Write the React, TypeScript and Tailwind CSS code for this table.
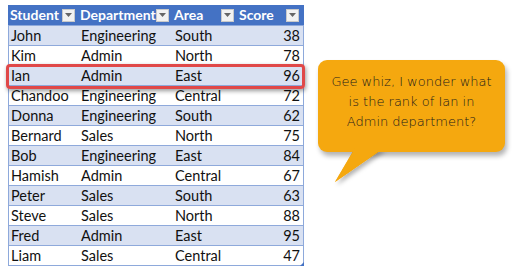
import React from 'react';

interface Row {
    student: string
    department: string
    area: string
    score: number
}

const rows: Row[] = [
    { student: 'John', department: 'Engineering', area: 'South', score: 38 },
    { student: 'Kim', department: 'Admin', area: 'North', score: 78 },
    { student: 'Ian', department: 'Admin', area: 'East', score: 96 },
    { student: 'Chandoo', department: 'Engineering', area: 'Central', score: 72 },
    { student: 'Donna', department: 'Engineering', area: 'South', score: 62 },
    { student: 'Bernard', department: 'Sales', area: 'North', score: 75 },
    { student: 'Bob', department: 'Engineering', area: 'East', score: 84 },
    { student: 'Hamish', department: 'Admin', area: 'Central', score: 67 },
    { student: 'Peter', department: 'Sales', area: 'South', score: 63 },
    { student: 'Steve', department: 'Sales', area: 'North', score: 88 },
    { student: 'Fred', department: 'Admin', area: 'East', score: 95 },
    { student: 'Liam', department: 'Sales', area: 'Central', score: 47 },
]

const FilterButton = () => (
    <span className="w-[13px] h-[13px] flex items-center justify-center bg-[#f2f2f2] border border-[#c9c9c9] shrink-0">
        <svg width="7" height="4" viewBox="0 0 7 4">
            <path d="M0 0h7L3.5 4z" fill="#666" />
        </svg>
    </span>
)

const HeaderCell = ({ label }: { label: string }) => (
    <div className="flex items-center justify-between pl-[2px] pr-[3px] h-full">
        <span className="font-bold text-white">{label}</span>
        <FilterButton />
    </div>
)

const App = () => {
    return (
        <div className="w-[517px] h-[274px] bg-white flex overflow-hidden" style={{ fontFamily: 'Lato, "Open Sans", sans-serif' }}>
            {/* Table */}
            <div className="ml-[8px] mt-[5px] relative w-[296px] h-fit">
                <div className="grid grid-cols-[70px_94px_65px_65px] h-[20px] bg-[#4472c4] text-[14px] leading-[20px]">
                    <HeaderCell label="Student" />
                    <HeaderCell label="Department" />
                    <HeaderCell label="Area" />
                    <HeaderCell label="Score" />
                </div>
                <div className="border-x border-b border-[#8ea9db]">
                    {rows.map((r, i) => (
                        <div
                            key={r.student}
                            className={`grid grid-cols-[70px_94px_65px_63px] h-[20px] text-[14.5px] leading-[19px] text-[#111] border-t border-[#8ea9db] ${i % 2 === 0 ? 'bg-[#d9e1f2]' : 'bg-white'}`}
                        >
                            <span className="pl-[2px]">{r.student}</span>
                            <span className="pl-[2px]">{r.department}</span>
                            <span className="pl-[2px]">{r.area}</span>
                            <span className="text-right pr-[1px]">{r.score}</span>
                        </div>
                    ))}
                </div>
                <span className="absolute right-0 bottom-0 w-0 h-0 border-l-[4px] border-b-[4px] border-l-transparent border-b-[#4472c4]" />
                {/* highlight on Ian row */}
                <div className="absolute left-[-2px] top-[59px] w-[299px] h-[25px] rounded-[4px] border-[3px] border-[#e04848] shadow-[1px_2px_4px_rgba(0,0,0,0.4)]" />
            </div>

            {/* Callout */}
            <div className="ml-[14px] mt-[60px] relative w-[187px] h-fit">
                <svg className="absolute left-0 top-[88px] overflow-visible" width="70" height="36" viewBox="0 0 70 36">
                    <defs>
                        <filter id="tailShadow" x="-50%" y="-50%" width="200%" height="200%">
                            <feDropShadow dx="2" dy="3" stdDeviation="2" floodColor="#000" floodOpacity="0.3" />
                        </filter>
                    </defs>
                    <polygon points="37,0 66,0 17,34" fill="#f5a80f" filter="url(#tailShadow)" />
                </svg>
                <div className="relative w-[187px] h-[92px] rounded-[9px] bg-[#f5a80f] shadow-[2px_4px_5px_rgba(0,0,0,0.3)] flex items-center justify-center">
                    <p className="text-center text-[13px] leading-[20px] text-[#1a1a1a] pb-[8px]" style={{ fontFamily: '"DejaVu Sans", sans-serif', fontWeight: 300 }}>
                        Gee whiz, I wonder what
                        <br />
                        is the rank of Ian in
                        <br />
                        Admin department?
                    </p>
                </div>
                <svg className="absolute left-0 top-[88px]" width="70" height="36" viewBox="0 0 70 36">
                    <polygon points="37,0 66,0 17,34" fill="#f5a80f" />
                </svg>
            </div>
        </div>
    );
};

export default App;
